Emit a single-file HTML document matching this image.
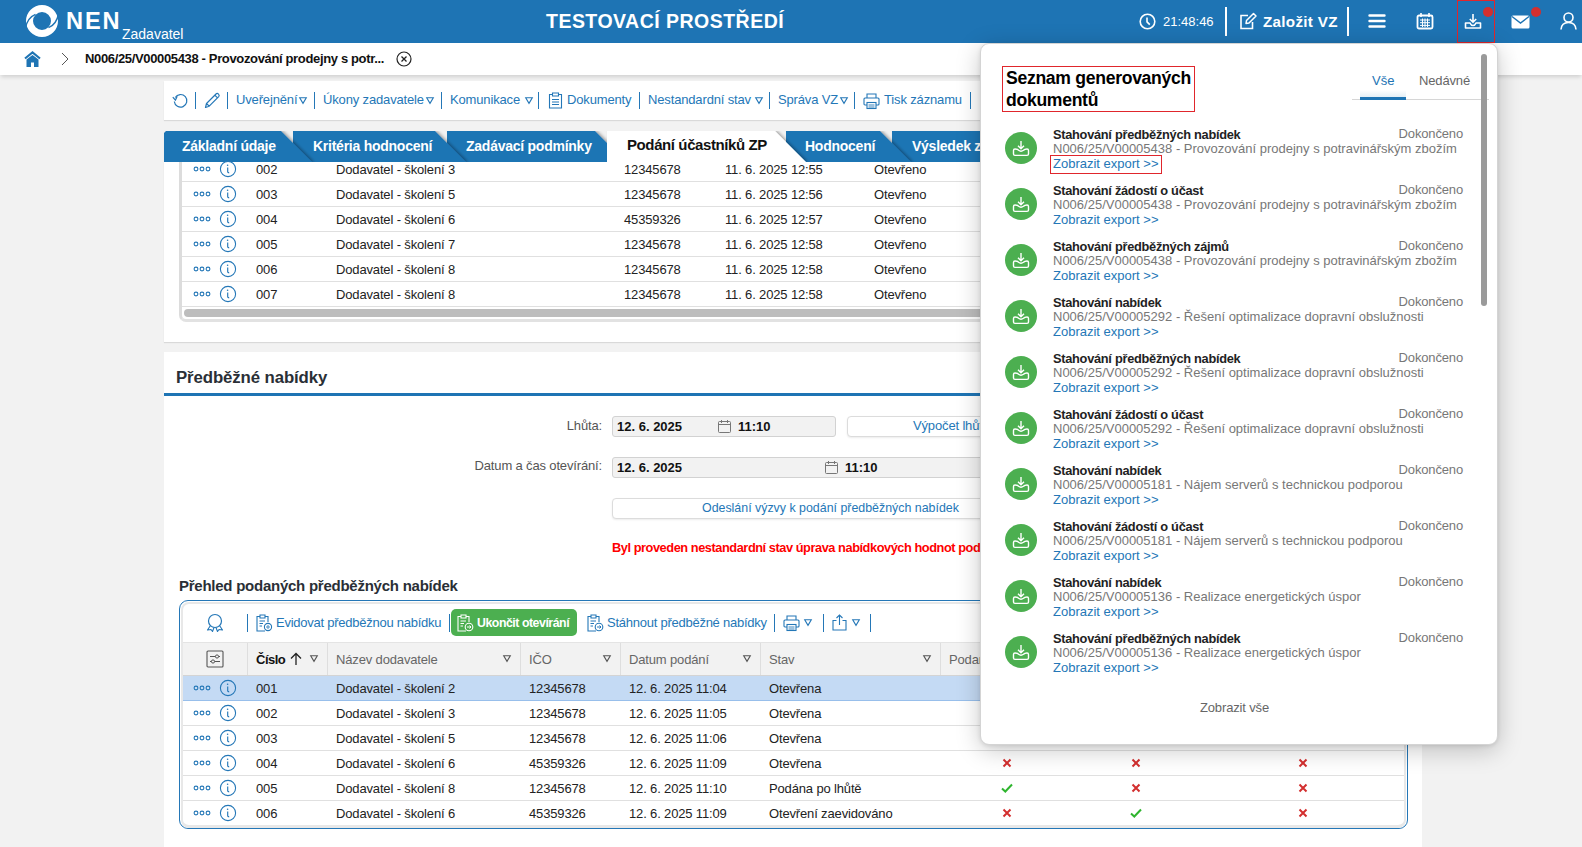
<!DOCTYPE html>
<html><head><meta charset="utf-8">
<style>
*{box-sizing:border-box}
html,body{margin:0;padding:0;width:1582px;height:847px;overflow:hidden;background:#f2f2f2;font-family:"Liberation Sans",sans-serif;font-size:13px;color:#222}
.a{position:absolute;white-space:nowrap}
.hdr{position:absolute;left:0;top:0;width:1582px;height:43px;background:#1e74b4}
.w{color:#fff}
.b{font-weight:bold}
.rg{letter-spacing:-0.15px}
.bd{letter-spacing:-0.4px;font-weight:bold}
.card{position:absolute;left:164px;width:1258px;background:#fff;box-shadow:0 1px 1px rgba(0,0,0,0.1)}
.lnk{color:#2477b7}
.sep{position:absolute;width:1px;background:#2477b7}
svg{position:absolute;overflow:visible}
</style></head><body>

<!-- HEADER -->
<div class="hdr">
  <svg style="left:26px;top:5px" width="32" height="32" viewBox="0 0 32 32">
    <circle cx="16" cy="16" r="12.5" fill="none" stroke="#fff" stroke-width="7"/>
    <path d="M-0.5 23 Q1.5 12.5 9.5 9.3" fill="none" stroke="#1e74b4" stroke-width="1.4"/>
    <path d="M32.5 9 Q30.5 19.5 22.5 22.7" fill="none" stroke="#1e74b4" stroke-width="1.4"/>
  </svg>
  <div class="a w b" style="left:66px;top:7px;font-size:23.6px;line-height:28px;letter-spacing:1.9px">NEN</div>
  <div class="a w" style="left:122px;top:26px;font-size:14px;line-height:16px;letter-spacing:0px">Zadavatel</div>
  <div class="a w b" style="left:546px;top:9px;font-size:19.5px;line-height:24px;letter-spacing:0.48px">TESTOVACÍ PROSTŘEDÍ</div>

  <svg style="left:1139px;top:13px" width="17" height="17" viewBox="0 0 17 17">
    <circle cx="8.5" cy="8.5" r="7.3" fill="none" stroke="#fff" stroke-width="1.6"/>
    <path d="M8 4.5 V8.8 L10.8 11.6" fill="none" stroke="#fff" stroke-width="1.6"/>
  </svg>
  <div class="a w" style="left:1163px;top:14px;line-height:16px">21:48:46</div>
  <div class="a" style="left:1225px;top:7px;width:2px;height:29px;background:#fff"></div>
  <svg style="left:1239px;top:12px" width="18" height="18" viewBox="0 0 18 18">
    <path d="M9 3.5 H2 V16.5 H13.5 V10" fill="none" stroke="#fff" stroke-width="1.6"/>
    <path d="M7 11.5 L7.5 8.5 L14.5 1.5 L17 4 L10 11 Z" fill="none" stroke="#fff" stroke-width="1.5" stroke-linejoin="round"/>
  </svg>
  <div class="a w b" style="left:1263px;top:12px;font-size:15.2px;line-height:20px;letter-spacing:0.3px">Založit VZ</div>
  <div class="a" style="left:1347px;top:7px;width:2px;height:29px;background:#fff"></div>
  <svg style="left:1368px;top:14px" width="18" height="14" viewBox="0 0 18 14">
    <path d="M1.5 1.5 H16.5 M1.5 7 H16.5 M1.5 12.5 H16.5" stroke="#fff" stroke-width="2.4" stroke-linecap="round"/>
  </svg>
  <svg style="left:1416px;top:12px" width="18" height="18" viewBox="0 0 18 18">
    <rect x="1.5" y="3.5" width="15" height="13" rx="1.5" fill="none" stroke="#fff" stroke-width="1.8"/>
    <path d="M5 1 V5 M13 1 V5" stroke="#fff" stroke-width="1.6"/>
    <path d="M4 8 H14 M4 10.7 H14 M4 13.4 H14 M6.5 6.5 V15 M9 6.5 V15 M11.5 6.5 V15" stroke="#fff" stroke-width="1"/>
  </svg>
  <div class="a" style="left:1457px;top:0;width:38px;height:43px;border:1.5px solid #e0262c"></div>
  <svg style="left:1464px;top:13px" width="18" height="17" viewBox="0 0 18 17">
    <path d="M9 1 V9 M5.8 6 L9 9.2 L12.2 6" fill="none" stroke="#fff" stroke-width="1.6"/>
    <path d="M1.5 10 V15 H16.5 V10 H12 Q11 12.5 9 12.5 Q7 12.5 6 10 Z" fill="none" stroke="#fff" stroke-width="1.6" stroke-linejoin="round"/>
  </svg>
  <div class="a" style="left:1483px;top:7px;width:10px;height:10px;border-radius:50%;background:#d32f2f"></div>
  <svg style="left:1511px;top:15px" width="19" height="14" viewBox="0 0 19 14">
    <rect x="0.5" y="0.5" width="18" height="13" rx="1.5" fill="#fff"/>
    <path d="M1 1.5 L9.5 8 L18 1.5" fill="none" stroke="#1e74b4" stroke-width="1.4"/>
  </svg>
  <div class="a" style="left:1531px;top:7px;width:10px;height:10px;border-radius:50%;background:#d32f2f"></div>
  <svg style="left:1560px;top:12px" width="17" height="18" viewBox="0 0 17 18">
    <circle cx="8.5" cy="5.5" r="4.5" fill="none" stroke="#fff" stroke-width="1.6"/>
    <path d="M1 17.5 Q1.5 10.5 8.5 10.5 Q15.5 10.5 16 17.5" fill="none" stroke="#fff" stroke-width="1.6"/>
  </svg>
</div>

<!-- BREADCRUMB -->
<div class="a" style="left:0;top:43px;width:1582px;height:32px;background:#fff;box-shadow:0 3px 4px -1px rgba(0,0,0,0.14)">
  <svg style="left:24px;top:8px" width="17" height="17" viewBox="0 0 17 17">
    <path d="M1 7.5 L8.5 1.5 L16 7.5" fill="none" stroke="#1e74b4" stroke-width="2.2"/>
    <path d="M2.5 8.5 L8.5 4 L14.5 8.5 V16 H10 V11.5 H7 V16 H2.5 Z" fill="#1e74b4"/>
  </svg>
  <svg style="left:61px;top:9px" width="8" height="14" viewBox="0 0 8 14">
    <path d="M1 1 L7 7 L1 13" fill="none" stroke="#444" stroke-width="0.9"/>
  </svg>
  <div class="a bd" style="left:85px;top:8px;line-height:16px;color:#111;letter-spacing:-0.35px">N006/25/V00005438 - Provozování prodejny s potr...</div>
  <svg style="left:396px;top:8px" width="16" height="16" viewBox="0 0 16 16">
    <circle cx="8" cy="8" r="7" fill="none" stroke="#222" stroke-width="1.2"/>
    <path d="M5.5 5.5 L10.5 10.5 M10.5 5.5 L5.5 10.5" stroke="#222" stroke-width="1.3"/>
  </svg>
</div>

<!-- TOOLBAR CARD -->
<div class="card" style="top:81px;height:39px" id="tb">
  <svg style="left:8px;top:11px" width="17" height="17" viewBox="0 0 17 17">
    <path d="M3.2 5.5 A6.3 6.3 0 1 1 2.3 9.5" fill="none" stroke="#2477b7" stroke-width="1.2"/>
    <path d="M0.8 5.2 L3.4 8.2 L5.2 4.2" fill="none" stroke="#2477b7" stroke-width="1.2"/>
  </svg>
  <div class="sep" style="left:31px;top:11px;height:17px"></div>
  <svg style="left:40px;top:11px" width="17" height="17" viewBox="0 0 17 17">
    <path d="M1.5 15.5 L2.5 11.5 L12 2 Q13.2 0.9 14.5 2.1 Q15.8 3.4 14.7 4.6 L5.2 14.2 Z M2.5 11.5 L5.2 14.2 M10.8 3.2 L13.5 5.9" fill="none" stroke="#2477b7" stroke-width="1.2" stroke-linejoin="round"/>
  </svg>
  <div class="sep" style="left:63px;top:11px;height:17px"></div>
  <div class="a lnk rg" style="left:72px;top:11px;line-height:16px">Uveřejnění</div>
  <svg style="left:135px;top:16px" width="8" height="7" viewBox="0 0 8 7"><path d="M0.7 0.7 H7.3 L4 6.3 Z" fill="none" stroke="#2477b7" stroke-width="1.1"/></svg>
  <div class="sep" style="left:150px;top:11px;height:17px"></div>
  <div class="a lnk rg" style="left:159px;top:11px;line-height:16px">Úkony zadavatele</div>
  <svg style="left:262px;top:16px" width="8" height="7" viewBox="0 0 8 7"><path d="M0.7 0.7 H7.3 L4 6.3 Z" fill="none" stroke="#2477b7" stroke-width="1.1"/></svg>
  <div class="sep" style="left:277px;top:11px;height:17px"></div>
  <div class="a lnk rg" style="left:286px;top:11px;line-height:16px">Komunikace</div>
  <svg style="left:361px;top:16px" width="8" height="7" viewBox="0 0 8 7"><path d="M0.7 0.7 H7.3 L4 6.3 Z" fill="none" stroke="#2477b7" stroke-width="1.1"/></svg>
  <div class="sep" style="left:374px;top:11px;height:17px"></div>
  <svg style="left:384px;top:11px" width="15" height="17" viewBox="0 0 15 17">
    <path d="M4.5 2.5 H1.5 V16 H13.5 V2.5 H10.5" fill="none" stroke="#2477b7" stroke-width="1.1"/>
    <path d="M4.5 1 H10.5 V4 H4.5 Z" fill="none" stroke="#2477b7" stroke-width="1.1"/>
    <path d="M4 7.5 H11 M4 10 H11 M4 12.5 H11" stroke="#2477b7" stroke-width="1"/>
  </svg>
  <div class="a lnk rg" style="left:403px;top:11px;line-height:16px">Dokumenty</div>
  <div class="sep" style="left:475px;top:11px;height:17px"></div>
  <div class="a lnk rg" style="left:484px;top:11px;line-height:16px">Nestandardní stav</div>
  <svg style="left:591px;top:16px" width="8" height="7" viewBox="0 0 8 7"><path d="M0.7 0.7 H7.3 L4 6.3 Z" fill="none" stroke="#2477b7" stroke-width="1.1"/></svg>
  <div class="sep" style="left:605px;top:11px;height:17px"></div>
  <div class="a lnk rg" style="left:614px;top:11px;line-height:16px">Správa VZ</div>
  <svg style="left:676px;top:16px" width="8" height="7" viewBox="0 0 8 7"><path d="M0.7 0.7 H7.3 L4 6.3 Z" fill="none" stroke="#2477b7" stroke-width="1.1"/></svg>
  <div class="sep" style="left:690px;top:11px;height:17px"></div>
  <svg style="left:699px;top:12px" width="17" height="16" viewBox="0 0 17 16">
    <path d="M4 5 V1 H13 V5" fill="none" stroke="#2477b7" stroke-width="1.1"/>
    <rect x="1" y="5" width="15" height="7" rx="1" fill="none" stroke="#2477b7" stroke-width="1.1"/>
    <rect x="4" y="9.5" width="9" height="6" fill="#fff" stroke="#2477b7" stroke-width="1.1"/>
    <path d="M5.5 12 H11.5 M5.5 14 H11.5" stroke="#2477b7" stroke-width="0.9"/>
  </svg>
  <div class="a lnk rg" style="left:720px;top:11px;line-height:16px">Tisk záznamu</div>
  <div class="sep" style="left:806px;top:11px;height:17px"></div>
</div>

<!-- CARD 2 -->
<div class="a" style="left:164px;top:162px;width:1258px;height:180px;background:#fff;box-shadow:0 1px 1px rgba(0,0,0,0.1)"></div>
<svg style="left:0;top:0" width="1582" height="162" viewBox="0 0 1582 162"><defs><filter id="sh" x="-5%" y="0" width="110%" height="100%"><feDropShadow dx="2.2" dy="0" stdDeviation="1.8" flood-color="#000" flood-opacity="0.33"/></filter><clipPath id="tc"><rect x="0" y="131" width="1582" height="31"/></clipPath></defs><g clip-path="url(#tc)"><path d="M892 131 L1100 131 L1131 162 L892 162 Z" fill="#1e74b4" filter="url(#sh)"/><path d="M786 131 L880 131 L911 162 L786 162 Z" fill="#1e74b4" filter="url(#sh)"/><path d="M447 131 L595 131 L626 162 L447 162 Z" fill="#1e74b4" filter="url(#sh)"/><path d="M293 131 L435 131 L466 162 L293 162 Z" fill="#1e74b4" filter="url(#sh)"/><path d="M164 133 L166 131 L281 131 L312 162 L164 162 Z" fill="#1e74b4" filter="url(#sh)"/><path d="M607 131 L775 131 L806 162 L607 162 Z" fill="#fff" filter="url(#sh)"/></g></svg>
<div class="a w bd" style="left:182px;top:138px;font-size:14px;line-height:17px;letter-spacing:-0.25px">Základní údaje</div>
<div class="a w bd" style="left:313px;top:138px;font-size:14px;line-height:17px;letter-spacing:-0.25px">Kritéria hodnocení</div>
<div class="a w bd" style="left:466px;top:138px;font-size:14px;line-height:17px;letter-spacing:-0.25px">Zadávací podmínky</div>
<div class="a w bd" style="left:805px;top:138px;font-size:14px;line-height:17px;letter-spacing:-0.25px">Hodnocení</div>
<div class="a w bd" style="left:912px;top:138px;font-size:14px;line-height:17px;letter-spacing:-0.25px">Výsledek zadávacího řízení</div>
<div class="a bd" style="left:627px;top:135px;font-size:15px;line-height:19px;color:#111;letter-spacing:-0.4px">Podání účastníků ZP</div>
<div class="a" style="left:179px;top:162px;width:1300px;height:160px;border-left:3px solid #dcdcdc;border-bottom:3px solid #e2e2e2;border-bottom-left-radius:7px"></div>
<svg style="left:193px;top:166px" width="18" height="6" viewBox="0 0 18 6"><circle cx="3" cy="3" r="1.9" fill="none" stroke="#2477b7" stroke-width="1.1"/><circle cx="9" cy="3" r="1.9" fill="none" stroke="#2477b7" stroke-width="1.1"/><circle cx="15" cy="3" r="1.9" fill="none" stroke="#2477b7" stroke-width="1.1"/></svg>
<svg style="left:219px;top:160px" width="18" height="18" viewBox="0 0 18 18"><circle cx="9" cy="9" r="7.6" fill="none" stroke="#2477b7" stroke-width="1.1"/><circle cx="8.6" cy="5.2" r="0.8" fill="#2477b7"/><path d="M8.7 7.6 V11.6 Q8.8 13 10.2 12.6" fill="none" stroke="#2477b7" stroke-width="1.15"/></svg>
<div class="a rg" style="left:256px;top:162px;line-height:16px">002</div>
<div class="a rg" style="left:336px;top:162px;line-height:16px">Dodavatel - školení 3</div>
<div class="a rg" style="left:624px;top:162px;line-height:16px">12345678</div>
<div class="a rg" style="left:725px;top:162px;line-height:16px">11. 6. 2025 12:55</div>
<div class="a rg" style="left:874px;top:162px;line-height:16px">Otevřeno</div>
<div class="a" style="left:182px;top:181px;width:1300px;height:1px;background:#e0e0e0"></div>
<svg style="left:193px;top:191px" width="18" height="6" viewBox="0 0 18 6"><circle cx="3" cy="3" r="1.9" fill="none" stroke="#2477b7" stroke-width="1.1"/><circle cx="9" cy="3" r="1.9" fill="none" stroke="#2477b7" stroke-width="1.1"/><circle cx="15" cy="3" r="1.9" fill="none" stroke="#2477b7" stroke-width="1.1"/></svg>
<svg style="left:219px;top:185px" width="18" height="18" viewBox="0 0 18 18"><circle cx="9" cy="9" r="7.6" fill="none" stroke="#2477b7" stroke-width="1.1"/><circle cx="8.6" cy="5.2" r="0.8" fill="#2477b7"/><path d="M8.7 7.6 V11.6 Q8.8 13 10.2 12.6" fill="none" stroke="#2477b7" stroke-width="1.15"/></svg>
<div class="a rg" style="left:256px;top:187px;line-height:16px">003</div>
<div class="a rg" style="left:336px;top:187px;line-height:16px">Dodavatel - školení 5</div>
<div class="a rg" style="left:624px;top:187px;line-height:16px">12345678</div>
<div class="a rg" style="left:725px;top:187px;line-height:16px">11. 6. 2025 12:56</div>
<div class="a rg" style="left:874px;top:187px;line-height:16px">Otevřeno</div>
<div class="a" style="left:182px;top:206px;width:1300px;height:1px;background:#e0e0e0"></div>
<svg style="left:193px;top:216px" width="18" height="6" viewBox="0 0 18 6"><circle cx="3" cy="3" r="1.9" fill="none" stroke="#2477b7" stroke-width="1.1"/><circle cx="9" cy="3" r="1.9" fill="none" stroke="#2477b7" stroke-width="1.1"/><circle cx="15" cy="3" r="1.9" fill="none" stroke="#2477b7" stroke-width="1.1"/></svg>
<svg style="left:219px;top:210px" width="18" height="18" viewBox="0 0 18 18"><circle cx="9" cy="9" r="7.6" fill="none" stroke="#2477b7" stroke-width="1.1"/><circle cx="8.6" cy="5.2" r="0.8" fill="#2477b7"/><path d="M8.7 7.6 V11.6 Q8.8 13 10.2 12.6" fill="none" stroke="#2477b7" stroke-width="1.15"/></svg>
<div class="a rg" style="left:256px;top:212px;line-height:16px">004</div>
<div class="a rg" style="left:336px;top:212px;line-height:16px">Dodavatel - školení 6</div>
<div class="a rg" style="left:624px;top:212px;line-height:16px">45359326</div>
<div class="a rg" style="left:725px;top:212px;line-height:16px">11. 6. 2025 12:57</div>
<div class="a rg" style="left:874px;top:212px;line-height:16px">Otevřeno</div>
<div class="a" style="left:182px;top:231px;width:1300px;height:1px;background:#e0e0e0"></div>
<svg style="left:193px;top:241px" width="18" height="6" viewBox="0 0 18 6"><circle cx="3" cy="3" r="1.9" fill="none" stroke="#2477b7" stroke-width="1.1"/><circle cx="9" cy="3" r="1.9" fill="none" stroke="#2477b7" stroke-width="1.1"/><circle cx="15" cy="3" r="1.9" fill="none" stroke="#2477b7" stroke-width="1.1"/></svg>
<svg style="left:219px;top:235px" width="18" height="18" viewBox="0 0 18 18"><circle cx="9" cy="9" r="7.6" fill="none" stroke="#2477b7" stroke-width="1.1"/><circle cx="8.6" cy="5.2" r="0.8" fill="#2477b7"/><path d="M8.7 7.6 V11.6 Q8.8 13 10.2 12.6" fill="none" stroke="#2477b7" stroke-width="1.15"/></svg>
<div class="a rg" style="left:256px;top:237px;line-height:16px">005</div>
<div class="a rg" style="left:336px;top:237px;line-height:16px">Dodavatel - školení 7</div>
<div class="a rg" style="left:624px;top:237px;line-height:16px">12345678</div>
<div class="a rg" style="left:725px;top:237px;line-height:16px">11. 6. 2025 12:58</div>
<div class="a rg" style="left:874px;top:237px;line-height:16px">Otevřeno</div>
<div class="a" style="left:182px;top:256px;width:1300px;height:1px;background:#e0e0e0"></div>
<svg style="left:193px;top:266px" width="18" height="6" viewBox="0 0 18 6"><circle cx="3" cy="3" r="1.9" fill="none" stroke="#2477b7" stroke-width="1.1"/><circle cx="9" cy="3" r="1.9" fill="none" stroke="#2477b7" stroke-width="1.1"/><circle cx="15" cy="3" r="1.9" fill="none" stroke="#2477b7" stroke-width="1.1"/></svg>
<svg style="left:219px;top:260px" width="18" height="18" viewBox="0 0 18 18"><circle cx="9" cy="9" r="7.6" fill="none" stroke="#2477b7" stroke-width="1.1"/><circle cx="8.6" cy="5.2" r="0.8" fill="#2477b7"/><path d="M8.7 7.6 V11.6 Q8.8 13 10.2 12.6" fill="none" stroke="#2477b7" stroke-width="1.15"/></svg>
<div class="a rg" style="left:256px;top:262px;line-height:16px">006</div>
<div class="a rg" style="left:336px;top:262px;line-height:16px">Dodavatel - školení 8</div>
<div class="a rg" style="left:624px;top:262px;line-height:16px">12345678</div>
<div class="a rg" style="left:725px;top:262px;line-height:16px">11. 6. 2025 12:58</div>
<div class="a rg" style="left:874px;top:262px;line-height:16px">Otevřeno</div>
<div class="a" style="left:182px;top:281px;width:1300px;height:1px;background:#e0e0e0"></div>
<svg style="left:193px;top:291px" width="18" height="6" viewBox="0 0 18 6"><circle cx="3" cy="3" r="1.9" fill="none" stroke="#2477b7" stroke-width="1.1"/><circle cx="9" cy="3" r="1.9" fill="none" stroke="#2477b7" stroke-width="1.1"/><circle cx="15" cy="3" r="1.9" fill="none" stroke="#2477b7" stroke-width="1.1"/></svg>
<svg style="left:219px;top:285px" width="18" height="18" viewBox="0 0 18 18"><circle cx="9" cy="9" r="7.6" fill="none" stroke="#2477b7" stroke-width="1.1"/><circle cx="8.6" cy="5.2" r="0.8" fill="#2477b7"/><path d="M8.7 7.6 V11.6 Q8.8 13 10.2 12.6" fill="none" stroke="#2477b7" stroke-width="1.15"/></svg>
<div class="a rg" style="left:256px;top:287px;line-height:16px">007</div>
<div class="a rg" style="left:336px;top:287px;line-height:16px">Dodavatel - školení 8</div>
<div class="a rg" style="left:624px;top:287px;line-height:16px">12345678</div>
<div class="a rg" style="left:725px;top:287px;line-height:16px">11. 6. 2025 12:58</div>
<div class="a rg" style="left:874px;top:287px;line-height:16px">Otevřeno</div>
<div class="a" style="left:182px;top:306px;width:1300px;height:1px;background:#e0e0e0"></div>
<div class="a" style="left:184px;top:309px;width:1300px;height:8px;border-radius:4px;background:#bdbdbd"></div>

<!-- CARD 3 -->
<div class="a" style="left:164px;top:352px;width:1258px;height:500px;background:#fff"></div>
<div class="a bd" style="left:176px;top:367.5px;font-size:16.8px;line-height:20px;color:#2a2f36;letter-spacing:-0.1px">Předběžné nabídky</div>
<div class="a" style="left:164px;top:393px;width:1258px;height:3px;background:#1e74b4"></div>
<div class="a rg" style="left:465px;top:418px;width:137px;text-align:right;line-height:16px;color:#555">Lhůta:</div>
<div class="a" style="left:612px;top:416px;width:224px;height:21px;background:#f2f2f2;border:1px solid #d2d2d2;border-radius:3px"></div>
<div class="a bd" style="left:617px;top:418.5px;line-height:16px;color:#111;letter-spacing:0">12. 6. 2025</div>
<svg style="left:718px;top:420px" width="13" height="13" viewBox="0 0 13 13"><rect x="0.5" y="1.5" width="12" height="11" rx="1" fill="none" stroke="#777" stroke-width="1"/><path d="M0.5 4.5 H12.5 M3.5 0 V3 M9.5 0 V3" stroke="#777" stroke-width="1"/></svg>
<div class="a bd" style="left:738px;top:418.5px;line-height:16px;color:#111;letter-spacing:0">11:10</div>
<div class="a" style="left:847px;top:416px;width:300px;height:21px;background:#fff;border:1px solid #dcdcdc;border-radius:4px;box-shadow:0 1px 2px rgba(0,0,0,0.08)"></div>
<div class="a lnk rg" style="left:913px;top:418px;line-height:16px">Výpočet lhůt</div>
<div class="a rg" style="left:400px;top:458px;width:202px;text-align:right;line-height:16px;color:#555">Datum a čas otevírání:</div>
<div class="a" style="left:612px;top:457px;width:500px;height:21px;background:#f2f2f2;border:1px solid #d2d2d2;border-radius:3px"></div>
<div class="a bd" style="left:617px;top:459.5px;line-height:16px;color:#111;letter-spacing:0">12. 6. 2025</div>
<svg style="left:825px;top:461px" width="13" height="13" viewBox="0 0 13 13"><rect x="0.5" y="1.5" width="12" height="11" rx="1" fill="none" stroke="#777" stroke-width="1"/><path d="M0.5 4.5 H12.5 M3.5 0 V3 M9.5 0 V3" stroke="#777" stroke-width="1"/></svg>
<div class="a bd" style="left:845px;top:459.5px;line-height:16px;color:#111;letter-spacing:0">11:10</div>
<div class="a" style="left:612px;top:498px;width:500px;height:21px;background:#fff;border:1px solid #dcdcdc;border-radius:4px;box-shadow:0 1px 2px rgba(0,0,0,0.08)"></div>
<div class="a lnk" style="left:702px;top:500px;line-height:16px;font-size:12.4px">Odeslání výzvy k podání předběžných nabídek</div>
<div class="a b" style="left:612px;top:540px;line-height:16px;font-size:12.8px;color:#f00;letter-spacing:-0.45px">Byl proveden nestandardní stav úprava nabídkových hodnot podání</div>
<div class="a bd" style="left:179px;top:577px;font-size:15px;line-height:18px;color:#2a2f36;letter-spacing:-0.25px">Přehled podaných předběžných nabídek</div>
<div class="a" style="left:179px;top:600px;width:1228.5px;height:229px;border:1.5px solid #2477b7;border-radius:9px;background:#fff"></div>
<svg style="left:206px;top:613px" width="18" height="19" viewBox="0 0 18 19"><circle cx="9" cy="8" r="6.5" fill="none" stroke="#2477b7" stroke-width="1.2"/><path d="M4.5 12.5 L1.5 17 L5 16.5 L6.5 18.5 L8 14.5 M13.5 12.5 L16.5 17 L13 16.5 L11.5 18.5 L10 14.5" fill="none" stroke="#2477b7" stroke-width="1.1" stroke-linejoin="round"/></svg>
<div class="sep" style="left:247px;top:614px;height:18px"></div>
<svg style="left:256px;top:614px" width="17" height="18" viewBox="0 0 17 18"><path d="M4 2.5 H1 V17 H9 M12 8 V2.5 H9" fill="none" stroke="#2477b7" stroke-width="1.1"/><path d="M4 1 H9 V4 H4 Z" fill="none" stroke="#2477b7" stroke-width="1.1"/><path d="M3.5 7 H9 M3.5 9.5 H7 M3.5 12 H6" stroke="#2477b7" stroke-width="1"/><circle cx="12" cy="13" r="3.6" fill="none" stroke="#2477b7" stroke-width="1.1"/><circle cx="12" cy="13" r="1.2" fill="none" stroke="#2477b7" stroke-width="0.9"/></svg>
<div class="a lnk rg" style="left:276px;top:615px;line-height:16px;letter-spacing:-0.25px">Evidovat předběžnou nabídku</div>
<div class="sep" style="left:449px;top:614px;height:18px"></div>
<div class="a" style="left:451px;top:609px;width:126px;height:27px;background:#4caf50;border-radius:5px"></div>
<svg style="left:457px;top:614px" width="17" height="18" viewBox="0 0 17 18"><path d="M4 2.5 H1 V17 H9 M12 8 V2.5 H9" fill="none" stroke="#fff" stroke-width="1.1"/><path d="M4 1 H9 V4 H4 Z" fill="none" stroke="#fff" stroke-width="1.1"/><path d="M3.5 7 H9 M3.5 9.5 H7 M3.5 12 H6" stroke="#fff" stroke-width="1"/><circle cx="12" cy="13" r="3.8" fill="none" stroke="#fff" stroke-width="1.1"/><path d="M10 13 H14 M12.5 11.5 L14 13 L12.5 14.5" fill="none" stroke="#fff" stroke-width="1"/></svg>
<div class="a w b" style="left:477px;top:615px;line-height:16px;font-size:12.3px;letter-spacing:-0.45px">Ukončit otevírání</div>
<svg style="left:587px;top:614px" width="17" height="18" viewBox="0 0 17 18"><path d="M4 2.5 H1 V17 H9 M12 8 V2.5 H9" fill="none" stroke="#2477b7" stroke-width="1.1"/><path d="M4 1 H9 V4 H4 Z" fill="none" stroke="#2477b7" stroke-width="1.1"/><path d="M3.5 7 H9 M3.5 9.5 H7 M3.5 12 H6" stroke="#2477b7" stroke-width="1"/><circle cx="12" cy="13" r="3.8" fill="none" stroke="#2477b7" stroke-width="1.1"/><path d="M10 13 H14 M12.5 11.5 L14 13 L12.5 14.5" fill="none" stroke="#2477b7" stroke-width="1"/></svg>
<div class="a lnk rg" style="left:607px;top:615px;line-height:16px;letter-spacing:-0.25px">Stáhnout předběžné nabídky</div>
<div class="sep" style="left:774px;top:614px;height:18px"></div>
<svg style="left:783px;top:615px" width="17" height="16" viewBox="0 0 17 16"><path d="M4 5 V1 H13 V5" fill="none" stroke="#2477b7" stroke-width="1.1"/><rect x="1" y="5" width="15" height="7" rx="1" fill="none" stroke="#2477b7" stroke-width="1.1"/><rect x="4" y="9.5" width="9" height="6" fill="#fff" stroke="#2477b7" stroke-width="1.1"/><path d="M5.5 12 H11.5 M5.5 14 H11.5" stroke="#2477b7" stroke-width="0.9"/></svg>
<svg style="left:804px;top:619px" width="8" height="7" viewBox="0 0 8 7"><path d="M0.7 0.7 H7.3 L4 6.3 Z" fill="none" stroke="#2477b7" stroke-width="1.1"/></svg>
<div class="sep" style="left:823px;top:614px;height:18px"></div>
<svg style="left:832px;top:614px" width="15" height="17" viewBox="0 0 15 17"><path d="M4.5 6.5 H1 V16 H14 V6.5 H10.5" fill="none" stroke="#2477b7" stroke-width="1.1"/><path d="M7.5 11 V1 M4.5 4 L7.5 1 L10.5 4" fill="none" stroke="#2477b7" stroke-width="1.1"/></svg>
<svg style="left:852px;top:619px" width="8" height="7" viewBox="0 0 8 7"><path d="M0.7 0.7 H7.3 L4 6.3 Z" fill="none" stroke="#2477b7" stroke-width="1.1"/></svg>
<div class="sep" style="left:870px;top:614px;height:18px"></div>
<div class="a" style="left:181px;top:642px;width:1225px;height:33px;background:#f2f2f2;border-top:1px solid #e4e4e4"></div>
<div class="a" style="left:247px;top:643px;width:1px;height:32px;background:#dedede"></div>
<div class="a" style="left:327px;top:643px;width:1px;height:32px;background:#dedede"></div>
<div class="a" style="left:520px;top:643px;width:1px;height:32px;background:#dedede"></div>
<div class="a" style="left:620px;top:643px;width:1px;height:32px;background:#dedede"></div>
<div class="a" style="left:760px;top:643px;width:1px;height:32px;background:#dedede"></div>
<div class="a" style="left:940px;top:643px;width:1px;height:32px;background:#dedede"></div>
<div class="a" style="left:1120px;top:643px;width:1px;height:32px;background:#dedede"></div>
<div class="a" style="left:1290px;top:643px;width:1px;height:32px;background:#dedede"></div>
<svg style="left:206px;top:650px" width="18" height="18" viewBox="0 0 18 18"><rect x="1" y="1" width="16" height="16" rx="1" fill="none" stroke="#555" stroke-width="1.1"/><path d="M4 6.5 H14 M4 11.5 H14" stroke="#555" stroke-width="1"/><circle cx="11" cy="6.5" r="1.6" fill="#f2f2f2" stroke="#555" stroke-width="1"/><circle cx="7" cy="11.5" r="1.6" fill="#f2f2f2" stroke="#555" stroke-width="1"/></svg>
<div class="a bd" style="left:256px;top:652px;line-height:16px;color:#111;letter-spacing:-0.5px">Číslo</div>
<svg style="left:289px;top:652px" width="14" height="14" viewBox="0 0 14 14"><path d="M7 13 V1.5 M2 6.5 L7 1.5 L12 6.5" fill="none" stroke="#222" stroke-width="1.3"/></svg>
<svg style="left:310px;top:655px" width="8" height="7" viewBox="0 0 8 7"><path d="M0.7 0.7 H7.3 L4 6.3 Z" fill="none" stroke="#555" stroke-width="1.1"/></svg>
<div class="a rg" style="left:336px;top:652px;line-height:16px;color:#666">Název dodavatele</div>
<svg style="left:503px;top:655px" width="8" height="7" viewBox="0 0 8 7"><path d="M0.7 0.7 H7.3 L4 6.3 Z" fill="none" stroke="#555" stroke-width="1.1"/></svg>
<div class="a rg" style="left:529px;top:652px;line-height:16px;color:#666">IČO</div>
<svg style="left:603px;top:655px" width="8" height="7" viewBox="0 0 8 7"><path d="M0.7 0.7 H7.3 L4 6.3 Z" fill="none" stroke="#555" stroke-width="1.1"/></svg>
<div class="a rg" style="left:629px;top:652px;line-height:16px;color:#666">Datum podání</div>
<svg style="left:743px;top:655px" width="8" height="7" viewBox="0 0 8 7"><path d="M0.7 0.7 H7.3 L4 6.3 Z" fill="none" stroke="#555" stroke-width="1.1"/></svg>
<div class="a rg" style="left:769px;top:652px;line-height:16px;color:#666">Stav</div>
<svg style="left:923px;top:655px" width="8" height="7" viewBox="0 0 8 7"><path d="M0.7 0.7 H7.3 L4 6.3 Z" fill="none" stroke="#555" stroke-width="1.1"/></svg>
<div class="a rg" style="left:949px;top:652px;line-height:16px;color:#666">Podané</div>
<svg style="left:1103px;top:655px" width="8" height="7" viewBox="0 0 8 7"><path d="M0.7 0.7 H7.3 L4 6.3 Z" fill="none" stroke="#555" stroke-width="1.1"/></svg>
<div class="a" style="left:181px;top:675px;width:1225px;height:1px;background:#d4d4d4"></div><div class="a" style="left:181px;top:676px;width:1225px;height:25px;background:#c4daf4;border-bottom:1.5px solid #98bfeb"></div>
<svg style="left:193px;top:685px" width="18" height="6" viewBox="0 0 18 6"><circle cx="3" cy="3" r="1.9" fill="none" stroke="#2477b7" stroke-width="1.1"/><circle cx="9" cy="3" r="1.9" fill="none" stroke="#2477b7" stroke-width="1.1"/><circle cx="15" cy="3" r="1.9" fill="none" stroke="#2477b7" stroke-width="1.1"/></svg>
<svg style="left:219px;top:679px" width="18" height="18" viewBox="0 0 18 18"><circle cx="9" cy="9" r="7.6" fill="none" stroke="#2477b7" stroke-width="1.1"/><circle cx="8.6" cy="5.2" r="0.8" fill="#2477b7"/><path d="M8.7 7.6 V11.6 Q8.8 13 10.2 12.6" fill="none" stroke="#2477b7" stroke-width="1.15"/></svg>
<div class="a rg" style="left:256px;top:681px;line-height:16px">001</div>
<div class="a rg" style="left:336px;top:681px;line-height:16px">Dodavatel - školení 2</div>
<div class="a rg" style="left:529px;top:681px;line-height:16px">12345678</div>
<div class="a rg" style="left:629px;top:681px;line-height:16px">12. 6. 2025 11:04</div>
<div class="a rg" style="left:769px;top:681px;line-height:16px">Otevřena</div>
<svg style="left:193px;top:710px" width="18" height="6" viewBox="0 0 18 6"><circle cx="3" cy="3" r="1.9" fill="none" stroke="#2477b7" stroke-width="1.1"/><circle cx="9" cy="3" r="1.9" fill="none" stroke="#2477b7" stroke-width="1.1"/><circle cx="15" cy="3" r="1.9" fill="none" stroke="#2477b7" stroke-width="1.1"/></svg>
<svg style="left:219px;top:704px" width="18" height="18" viewBox="0 0 18 18"><circle cx="9" cy="9" r="7.6" fill="none" stroke="#2477b7" stroke-width="1.1"/><circle cx="8.6" cy="5.2" r="0.8" fill="#2477b7"/><path d="M8.7 7.6 V11.6 Q8.8 13 10.2 12.6" fill="none" stroke="#2477b7" stroke-width="1.15"/></svg>
<div class="a rg" style="left:256px;top:706px;line-height:16px">002</div>
<div class="a rg" style="left:336px;top:706px;line-height:16px">Dodavatel - školení 3</div>
<div class="a rg" style="left:529px;top:706px;line-height:16px">12345678</div>
<div class="a rg" style="left:629px;top:706px;line-height:16px">12. 6. 2025 11:05</div>
<div class="a rg" style="left:769px;top:706px;line-height:16px">Otevřena</div>

<svg style="left:193px;top:735px" width="18" height="6" viewBox="0 0 18 6"><circle cx="3" cy="3" r="1.9" fill="none" stroke="#2477b7" stroke-width="1.1"/><circle cx="9" cy="3" r="1.9" fill="none" stroke="#2477b7" stroke-width="1.1"/><circle cx="15" cy="3" r="1.9" fill="none" stroke="#2477b7" stroke-width="1.1"/></svg>
<svg style="left:219px;top:729px" width="18" height="18" viewBox="0 0 18 18"><circle cx="9" cy="9" r="7.6" fill="none" stroke="#2477b7" stroke-width="1.1"/><circle cx="8.6" cy="5.2" r="0.8" fill="#2477b7"/><path d="M8.7 7.6 V11.6 Q8.8 13 10.2 12.6" fill="none" stroke="#2477b7" stroke-width="1.15"/></svg>
<div class="a rg" style="left:256px;top:731px;line-height:16px">003</div>
<div class="a rg" style="left:336px;top:731px;line-height:16px">Dodavatel - školení 5</div>
<div class="a rg" style="left:529px;top:731px;line-height:16px">12345678</div>
<div class="a rg" style="left:629px;top:731px;line-height:16px">12. 6. 2025 11:06</div>
<div class="a rg" style="left:769px;top:731px;line-height:16px">Otevřena</div>
<div class="a" style="left:181px;top:725px;width:1225px;height:1px;background:#e0e0e0"></div>
<svg style="left:193px;top:760px" width="18" height="6" viewBox="0 0 18 6"><circle cx="3" cy="3" r="1.9" fill="none" stroke="#2477b7" stroke-width="1.1"/><circle cx="9" cy="3" r="1.9" fill="none" stroke="#2477b7" stroke-width="1.1"/><circle cx="15" cy="3" r="1.9" fill="none" stroke="#2477b7" stroke-width="1.1"/></svg>
<svg style="left:219px;top:754px" width="18" height="18" viewBox="0 0 18 18"><circle cx="9" cy="9" r="7.6" fill="none" stroke="#2477b7" stroke-width="1.1"/><circle cx="8.6" cy="5.2" r="0.8" fill="#2477b7"/><path d="M8.7 7.6 V11.6 Q8.8 13 10.2 12.6" fill="none" stroke="#2477b7" stroke-width="1.15"/></svg>
<div class="a rg" style="left:256px;top:756px;line-height:16px">004</div>
<div class="a rg" style="left:336px;top:756px;line-height:16px">Dodavatel - školení 6</div>
<div class="a rg" style="left:529px;top:756px;line-height:16px">45359326</div>
<div class="a rg" style="left:629px;top:756px;line-height:16px">12. 6. 2025 11:09</div>
<div class="a rg" style="left:769px;top:756px;line-height:16px">Otevřena</div>
<div class="a" style="left:181px;top:750px;width:1225px;height:1px;background:#e0e0e0"></div>
<svg style="left:193px;top:785px" width="18" height="6" viewBox="0 0 18 6"><circle cx="3" cy="3" r="1.9" fill="none" stroke="#2477b7" stroke-width="1.1"/><circle cx="9" cy="3" r="1.9" fill="none" stroke="#2477b7" stroke-width="1.1"/><circle cx="15" cy="3" r="1.9" fill="none" stroke="#2477b7" stroke-width="1.1"/></svg>
<svg style="left:219px;top:779px" width="18" height="18" viewBox="0 0 18 18"><circle cx="9" cy="9" r="7.6" fill="none" stroke="#2477b7" stroke-width="1.1"/><circle cx="8.6" cy="5.2" r="0.8" fill="#2477b7"/><path d="M8.7 7.6 V11.6 Q8.8 13 10.2 12.6" fill="none" stroke="#2477b7" stroke-width="1.15"/></svg>
<div class="a rg" style="left:256px;top:781px;line-height:16px">005</div>
<div class="a rg" style="left:336px;top:781px;line-height:16px">Dodavatel - školení 8</div>
<div class="a rg" style="left:529px;top:781px;line-height:16px">12345678</div>
<div class="a rg" style="left:629px;top:781px;line-height:16px">12. 6. 2025 11:10</div>
<div class="a rg" style="left:769px;top:781px;line-height:16px">Podána po lhůtě</div>
<div class="a" style="left:181px;top:775px;width:1225px;height:1px;background:#e0e0e0"></div>
<svg style="left:193px;top:810px" width="18" height="6" viewBox="0 0 18 6"><circle cx="3" cy="3" r="1.9" fill="none" stroke="#2477b7" stroke-width="1.1"/><circle cx="9" cy="3" r="1.9" fill="none" stroke="#2477b7" stroke-width="1.1"/><circle cx="15" cy="3" r="1.9" fill="none" stroke="#2477b7" stroke-width="1.1"/></svg>
<svg style="left:219px;top:804px" width="18" height="18" viewBox="0 0 18 18"><circle cx="9" cy="9" r="7.6" fill="none" stroke="#2477b7" stroke-width="1.1"/><circle cx="8.6" cy="5.2" r="0.8" fill="#2477b7"/><path d="M8.7 7.6 V11.6 Q8.8 13 10.2 12.6" fill="none" stroke="#2477b7" stroke-width="1.15"/></svg>
<div class="a rg" style="left:256px;top:806px;line-height:16px">006</div>
<div class="a rg" style="left:336px;top:806px;line-height:16px">Dodavatel - školení 6</div>
<div class="a rg" style="left:529px;top:806px;line-height:16px">45359326</div>
<div class="a rg" style="left:629px;top:806px;line-height:16px">12. 6. 2025 11:09</div>
<div class="a rg" style="left:769px;top:806px;line-height:16px">Otevření zaevidováno</div>
<div class="a" style="left:181px;top:800px;width:1225px;height:1px;background:#e0e0e0"></div>
<div class="a" style="left:181px;top:725px;width:1225px;height:1px;background:#e0e0e0"></div>
<div class="a" style="left:181px;top:750px;width:1225px;height:1px;background:#e0e0e0"></div>
<div class="a" style="left:181px;top:775px;width:1225px;height:1px;background:#e0e0e0"></div>
<div class="a" style="left:181px;top:800px;width:1225px;height:1px;background:#e0e0e0"></div>


<svg style="left:1002px;top:758px" width="10" height="10" viewBox="0 0 10 10"><path d="M1.5 1.5 L8.5 8.5 M8.5 1.5 L1.5 8.5" stroke="#d32f2f" stroke-width="2"/></svg>
<svg style="left:1131px;top:758px" width="10" height="10" viewBox="0 0 10 10"><path d="M1.5 1.5 L8.5 8.5 M8.5 1.5 L1.5 8.5" stroke="#d32f2f" stroke-width="2"/></svg>
<svg style="left:1298px;top:758px" width="10" height="10" viewBox="0 0 10 10"><path d="M1.5 1.5 L8.5 8.5 M8.5 1.5 L1.5 8.5" stroke="#d32f2f" stroke-width="2"/></svg>
<svg style="left:1001px;top:783px" width="12" height="10" viewBox="0 0 12 10"><path d="M1 5.5 L4.3 8.5 L11 1.5" fill="none" stroke="#2fb52f" stroke-width="2"/></svg>
<svg style="left:1131px;top:783px" width="10" height="10" viewBox="0 0 10 10"><path d="M1.5 1.5 L8.5 8.5 M8.5 1.5 L1.5 8.5" stroke="#d32f2f" stroke-width="2"/></svg>
<svg style="left:1298px;top:783px" width="10" height="10" viewBox="0 0 10 10"><path d="M1.5 1.5 L8.5 8.5 M8.5 1.5 L1.5 8.5" stroke="#d32f2f" stroke-width="2"/></svg>
<svg style="left:1002px;top:808px" width="10" height="10" viewBox="0 0 10 10"><path d="M1.5 1.5 L8.5 8.5 M8.5 1.5 L1.5 8.5" stroke="#d32f2f" stroke-width="2"/></svg>
<svg style="left:1130px;top:808px" width="12" height="10" viewBox="0 0 12 10"><path d="M1 5.5 L4.3 8.5 L11 1.5" fill="none" stroke="#2fb52f" stroke-width="2"/></svg>
<svg style="left:1298px;top:808px" width="10" height="10" viewBox="0 0 10 10"><path d="M1.5 1.5 L8.5 8.5 M8.5 1.5 L1.5 8.5" stroke="#d32f2f" stroke-width="2"/></svg>

<div class="a" style="left:180.5px;top:601.5px;width:1225.5px;height:226px;border:2px solid #e8e8e8;border-bottom-width:3px;border-radius:8px"></div>
<!-- POPUP -->
<div class="a" style="left:980px;top:43px;width:518px;height:702px;background:#fff;border-radius:9px;box-shadow:0 5px 24px rgba(0,0,0,0.22),0 1px 4px rgba(0,0,0,0.1);border:1px solid #d4d4d4"></div>
<div class="a" style="left:1002px;top:66px;width:193px;height:46px;border:1.3px solid #e0262c"></div>
<div class="a b" style="left:1006px;top:68px;font-size:17.6px;line-height:21.5px;color:#000;letter-spacing:-0.3px;white-space:normal;width:192px">Seznam generovaných dokumentů</div>
<div class="a" style="left:1352px;top:99px;width:137px;height:1px;background:#d6d6d6"></div>
<div class="a" style="left:1360px;top:90px;width:46px;height:7px;background:linear-gradient(rgba(30,116,180,0),rgba(30,116,180,0.12))"></div>
<div class="a" style="left:1360px;top:97px;width:46px;height:3px;background:#1e74b4"></div>
<div class="a" style="left:1372px;top:73px;line-height:16px;color:#1e74b4">Vše</div>
<div class="a rg" style="left:1419px;top:73px;line-height:16px;color:#666">Nedávné</div>
<div class="a" style="left:1481px;top:54px;width:6px;height:252px;border-radius:3px;background:#9a9a9a"></div>
<svg style="left:1005px;top:132px" width="32" height="32" viewBox="0 0 32 32"><circle cx="16" cy="16" r="16" fill="#4caf50"/><path d="M16 9 V16.5 M13 13.7 L16 16.7 L19 13.7" fill="none" stroke="#fff" stroke-width="1.4"/><path d="M8.5 18.5 Q8.5 17 10 17 Q12.5 17 13.5 18.3 Q16 20.2 18.5 18.3 Q19.5 17 22 17 Q23.5 17 23.5 18.5 V22 Q23.5 23.4 22 23.4 H10 Q8.5 23.4 8.5 22 Z" fill="none" stroke="#fff" stroke-width="1.4"/></svg>
<div class="a b" style="left:1053px;top:126.5px;line-height:15px;font-size:12.8px;color:#222;letter-spacing:-0.28px">Stahování předběžných nabídek</div>
<div class="a" style="left:1363px;top:126px;width:100px;text-align:right;line-height:15px;color:#777;letter-spacing:-0.15px">Dokončeno</div>
<div class="a" style="left:1053px;top:140.5px;line-height:15px;color:#777">N006/25/V00005438 - Provozování prodejny s potravinářským zbožím</div>
<div class="a lnk" style="left:1053px;top:155.5px;line-height:15px">Zobrazit export &gt;&gt;</div>
<svg style="left:1005px;top:188px" width="32" height="32" viewBox="0 0 32 32"><circle cx="16" cy="16" r="16" fill="#4caf50"/><path d="M16 9 V16.5 M13 13.7 L16 16.7 L19 13.7" fill="none" stroke="#fff" stroke-width="1.4"/><path d="M8.5 18.5 Q8.5 17 10 17 Q12.5 17 13.5 18.3 Q16 20.2 18.5 18.3 Q19.5 17 22 17 Q23.5 17 23.5 18.5 V22 Q23.5 23.4 22 23.4 H10 Q8.5 23.4 8.5 22 Z" fill="none" stroke="#fff" stroke-width="1.4"/></svg>
<div class="a b" style="left:1053px;top:182.5px;line-height:15px;font-size:12.8px;color:#222;letter-spacing:-0.28px">Stahování žádostí o účast</div>
<div class="a" style="left:1363px;top:182px;width:100px;text-align:right;line-height:15px;color:#777;letter-spacing:-0.15px">Dokončeno</div>
<div class="a" style="left:1053px;top:196.5px;line-height:15px;color:#777">N006/25/V00005438 - Provozování prodejny s potravinářským zbožím</div>
<div class="a lnk" style="left:1053px;top:211.5px;line-height:15px">Zobrazit export &gt;&gt;</div>
<svg style="left:1005px;top:244px" width="32" height="32" viewBox="0 0 32 32"><circle cx="16" cy="16" r="16" fill="#4caf50"/><path d="M16 9 V16.5 M13 13.7 L16 16.7 L19 13.7" fill="none" stroke="#fff" stroke-width="1.4"/><path d="M8.5 18.5 Q8.5 17 10 17 Q12.5 17 13.5 18.3 Q16 20.2 18.5 18.3 Q19.5 17 22 17 Q23.5 17 23.5 18.5 V22 Q23.5 23.4 22 23.4 H10 Q8.5 23.4 8.5 22 Z" fill="none" stroke="#fff" stroke-width="1.4"/></svg>
<div class="a b" style="left:1053px;top:238.5px;line-height:15px;font-size:12.8px;color:#222;letter-spacing:-0.28px">Stahování předběžných zájmů</div>
<div class="a" style="left:1363px;top:238px;width:100px;text-align:right;line-height:15px;color:#777;letter-spacing:-0.15px">Dokončeno</div>
<div class="a" style="left:1053px;top:252.5px;line-height:15px;color:#777">N006/25/V00005438 - Provozování prodejny s potravinářským zbožím</div>
<div class="a lnk" style="left:1053px;top:267.5px;line-height:15px">Zobrazit export &gt;&gt;</div>
<svg style="left:1005px;top:300px" width="32" height="32" viewBox="0 0 32 32"><circle cx="16" cy="16" r="16" fill="#4caf50"/><path d="M16 9 V16.5 M13 13.7 L16 16.7 L19 13.7" fill="none" stroke="#fff" stroke-width="1.4"/><path d="M8.5 18.5 Q8.5 17 10 17 Q12.5 17 13.5 18.3 Q16 20.2 18.5 18.3 Q19.5 17 22 17 Q23.5 17 23.5 18.5 V22 Q23.5 23.4 22 23.4 H10 Q8.5 23.4 8.5 22 Z" fill="none" stroke="#fff" stroke-width="1.4"/></svg>
<div class="a b" style="left:1053px;top:294.5px;line-height:15px;font-size:12.8px;color:#222;letter-spacing:-0.28px">Stahování nabídek</div>
<div class="a" style="left:1363px;top:294px;width:100px;text-align:right;line-height:15px;color:#777;letter-spacing:-0.15px">Dokončeno</div>
<div class="a" style="left:1053px;top:308.5px;line-height:15px;color:#777">N006/25/V00005292 - Řešení optimalizace dopravní obslužnosti</div>
<div class="a lnk" style="left:1053px;top:323.5px;line-height:15px">Zobrazit export &gt;&gt;</div>
<svg style="left:1005px;top:356px" width="32" height="32" viewBox="0 0 32 32"><circle cx="16" cy="16" r="16" fill="#4caf50"/><path d="M16 9 V16.5 M13 13.7 L16 16.7 L19 13.7" fill="none" stroke="#fff" stroke-width="1.4"/><path d="M8.5 18.5 Q8.5 17 10 17 Q12.5 17 13.5 18.3 Q16 20.2 18.5 18.3 Q19.5 17 22 17 Q23.5 17 23.5 18.5 V22 Q23.5 23.4 22 23.4 H10 Q8.5 23.4 8.5 22 Z" fill="none" stroke="#fff" stroke-width="1.4"/></svg>
<div class="a b" style="left:1053px;top:350.5px;line-height:15px;font-size:12.8px;color:#222;letter-spacing:-0.28px">Stahování předběžných nabídek</div>
<div class="a" style="left:1363px;top:350px;width:100px;text-align:right;line-height:15px;color:#777;letter-spacing:-0.15px">Dokončeno</div>
<div class="a" style="left:1053px;top:364.5px;line-height:15px;color:#777">N006/25/V00005292 - Řešení optimalizace dopravní obslužnosti</div>
<div class="a lnk" style="left:1053px;top:379.5px;line-height:15px">Zobrazit export &gt;&gt;</div>
<svg style="left:1005px;top:412px" width="32" height="32" viewBox="0 0 32 32"><circle cx="16" cy="16" r="16" fill="#4caf50"/><path d="M16 9 V16.5 M13 13.7 L16 16.7 L19 13.7" fill="none" stroke="#fff" stroke-width="1.4"/><path d="M8.5 18.5 Q8.5 17 10 17 Q12.5 17 13.5 18.3 Q16 20.2 18.5 18.3 Q19.5 17 22 17 Q23.5 17 23.5 18.5 V22 Q23.5 23.4 22 23.4 H10 Q8.5 23.4 8.5 22 Z" fill="none" stroke="#fff" stroke-width="1.4"/></svg>
<div class="a b" style="left:1053px;top:406.5px;line-height:15px;font-size:12.8px;color:#222;letter-spacing:-0.28px">Stahování žádostí o účast</div>
<div class="a" style="left:1363px;top:406px;width:100px;text-align:right;line-height:15px;color:#777;letter-spacing:-0.15px">Dokončeno</div>
<div class="a" style="left:1053px;top:420.5px;line-height:15px;color:#777">N006/25/V00005292 - Řešení optimalizace dopravní obslužnosti</div>
<div class="a lnk" style="left:1053px;top:435.5px;line-height:15px">Zobrazit export &gt;&gt;</div>
<svg style="left:1005px;top:468px" width="32" height="32" viewBox="0 0 32 32"><circle cx="16" cy="16" r="16" fill="#4caf50"/><path d="M16 9 V16.5 M13 13.7 L16 16.7 L19 13.7" fill="none" stroke="#fff" stroke-width="1.4"/><path d="M8.5 18.5 Q8.5 17 10 17 Q12.5 17 13.5 18.3 Q16 20.2 18.5 18.3 Q19.5 17 22 17 Q23.5 17 23.5 18.5 V22 Q23.5 23.4 22 23.4 H10 Q8.5 23.4 8.5 22 Z" fill="none" stroke="#fff" stroke-width="1.4"/></svg>
<div class="a b" style="left:1053px;top:462.5px;line-height:15px;font-size:12.8px;color:#222;letter-spacing:-0.28px">Stahování nabídek</div>
<div class="a" style="left:1363px;top:462px;width:100px;text-align:right;line-height:15px;color:#777;letter-spacing:-0.15px">Dokončeno</div>
<div class="a" style="left:1053px;top:476.5px;line-height:15px;color:#777">N006/25/V00005181 - Nájem serverů s technickou podporou</div>
<div class="a lnk" style="left:1053px;top:491.5px;line-height:15px">Zobrazit export &gt;&gt;</div>
<svg style="left:1005px;top:524px" width="32" height="32" viewBox="0 0 32 32"><circle cx="16" cy="16" r="16" fill="#4caf50"/><path d="M16 9 V16.5 M13 13.7 L16 16.7 L19 13.7" fill="none" stroke="#fff" stroke-width="1.4"/><path d="M8.5 18.5 Q8.5 17 10 17 Q12.5 17 13.5 18.3 Q16 20.2 18.5 18.3 Q19.5 17 22 17 Q23.5 17 23.5 18.5 V22 Q23.5 23.4 22 23.4 H10 Q8.5 23.4 8.5 22 Z" fill="none" stroke="#fff" stroke-width="1.4"/></svg>
<div class="a b" style="left:1053px;top:518.5px;line-height:15px;font-size:12.8px;color:#222;letter-spacing:-0.28px">Stahování žádostí o účast</div>
<div class="a" style="left:1363px;top:518px;width:100px;text-align:right;line-height:15px;color:#777;letter-spacing:-0.15px">Dokončeno</div>
<div class="a" style="left:1053px;top:532.5px;line-height:15px;color:#777">N006/25/V00005181 - Nájem serverů s technickou podporou</div>
<div class="a lnk" style="left:1053px;top:547.5px;line-height:15px">Zobrazit export &gt;&gt;</div>
<svg style="left:1005px;top:580px" width="32" height="32" viewBox="0 0 32 32"><circle cx="16" cy="16" r="16" fill="#4caf50"/><path d="M16 9 V16.5 M13 13.7 L16 16.7 L19 13.7" fill="none" stroke="#fff" stroke-width="1.4"/><path d="M8.5 18.5 Q8.5 17 10 17 Q12.5 17 13.5 18.3 Q16 20.2 18.5 18.3 Q19.5 17 22 17 Q23.5 17 23.5 18.5 V22 Q23.5 23.4 22 23.4 H10 Q8.5 23.4 8.5 22 Z" fill="none" stroke="#fff" stroke-width="1.4"/></svg>
<div class="a b" style="left:1053px;top:574.5px;line-height:15px;font-size:12.8px;color:#222;letter-spacing:-0.28px">Stahování nabídek</div>
<div class="a" style="left:1363px;top:574px;width:100px;text-align:right;line-height:15px;color:#777;letter-spacing:-0.15px">Dokončeno</div>
<div class="a" style="left:1053px;top:588.5px;line-height:15px;color:#777">N006/25/V00005136 - Realizace energetických úspor</div>
<div class="a lnk" style="left:1053px;top:603.5px;line-height:15px">Zobrazit export &gt;&gt;</div>
<svg style="left:1005px;top:636px" width="32" height="32" viewBox="0 0 32 32"><circle cx="16" cy="16" r="16" fill="#4caf50"/><path d="M16 9 V16.5 M13 13.7 L16 16.7 L19 13.7" fill="none" stroke="#fff" stroke-width="1.4"/><path d="M8.5 18.5 Q8.5 17 10 17 Q12.5 17 13.5 18.3 Q16 20.2 18.5 18.3 Q19.5 17 22 17 Q23.5 17 23.5 18.5 V22 Q23.5 23.4 22 23.4 H10 Q8.5 23.4 8.5 22 Z" fill="none" stroke="#fff" stroke-width="1.4"/></svg>
<div class="a b" style="left:1053px;top:630.5px;line-height:15px;font-size:12.8px;color:#222;letter-spacing:-0.28px">Stahování předběžných nabídek</div>
<div class="a" style="left:1363px;top:630px;width:100px;text-align:right;line-height:15px;color:#777;letter-spacing:-0.15px">Dokončeno</div>
<div class="a" style="left:1053px;top:644.5px;line-height:15px;color:#777">N006/25/V00005136 - Realizace energetických úspor</div>
<div class="a lnk" style="left:1053px;top:659.5px;line-height:15px">Zobrazit export &gt;&gt;</div>
<div class="a" style="left:1050px;top:155px;width:112px;height:19px;border:1.3px solid #e0262c"></div>
<div class="a rg" style="left:1200px;top:700px;line-height:16px;color:#666">Zobrazit vše</div>

</body></html>
